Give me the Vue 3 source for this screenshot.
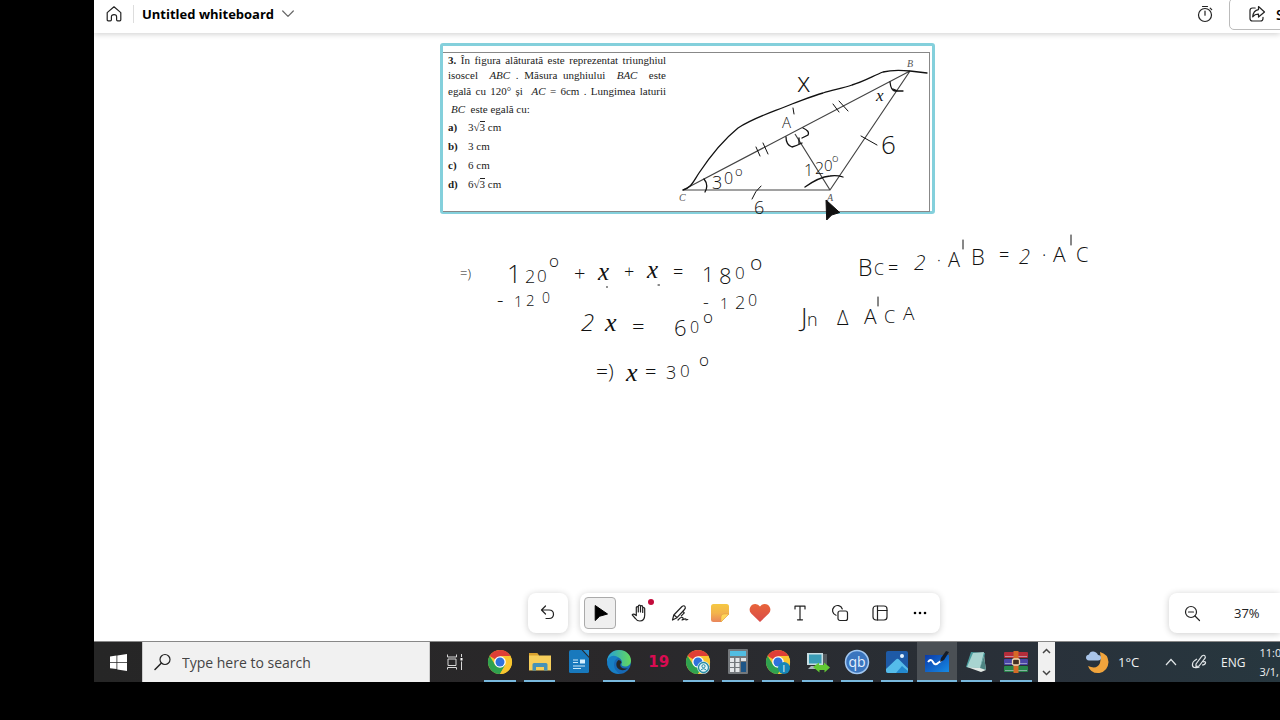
<script setup>
const ink = [
  { t: '=)', x: 460, y: 278, s: 13 },
  { t: '1', x: 507, y: 283, s: 25 }, { t: '2', x: 525, y: 283, s: 18 }, { t: '0', x: 537, y: 282, s: 17 }, { t: 'o', x: 549, y: 267, s: 17 },
  { t: '+', x: 574, y: 281, s: 20 }, { t: 'x', x: 598, y: 280, s: 25, i: true },
  { t: '+', x: 624, y: 278, s: 18 }, { t: 'x', x: 647, y: 278, s: 25, i: true }, { t: '=', x: 673, y: 278, s: 18 },
  { t: '1', x: 702, y: 282, s: 21 }, { t: '8', x: 719, y: 284, s: 22 }, { t: '0', x: 735, y: 279, s: 17 }, { t: 'o', x: 750, y: 270, s: 21 },
  { t: '-', x: 497, y: 307, s: 20 }, { t: '1', x: 514, y: 307, s: 15 }, { t: '2', x: 526, y: 306, s: 15 }, { t: '0', x: 542, y: 303, s: 14 },
  { t: '-', x: 703, y: 309, s: 18 }, { t: '1', x: 720, y: 309, s: 15 }, { t: '2', x: 735, y: 309, s: 18 }, { t: '0', x: 748, y: 306, s: 16 },
  { t: '2', x: 581, y: 331, s: 24, h: true }, { t: 'x', x: 605, y: 331, s: 26, i: true }, { t: '=', x: 632, y: 334, s: 22 },
  { t: '6', x: 674, y: 336, s: 22 }, { t: '0', x: 690, y: 333, s: 16 }, { t: 'o', x: 703, y: 323, s: 17 },
  { t: '=)', x: 596, y: 379, s: 21 }, { t: 'x', x: 626, y: 381, s: 26, i: true }, { t: '=', x: 645, y: 379, s: 20 },
  { t: '3', x: 666, y: 379, s: 18 }, { t: '0', x: 680, y: 377, s: 17 }, { t: 'o', x: 699, y: 366, s: 17 },
  { t: 'B', x: 858, y: 276, s: 23 }, { t: 'C', x: 874, y: 275, s: 16 }, { t: '=', x: 888, y: 274, s: 18 },
  { t: '2', x: 914, y: 270, s: 21, h: true }, { t: '·', x: 937, y: 266, s: 16 },
  { t: 'A', x: 948, y: 267, s: 20 }, { t: 'B', x: 971, y: 265, s: 22 }, { t: '=', x: 999, y: 261, s: 18 },
  { t: '2', x: 1019, y: 264, s: 20, h: true }, { t: '·', x: 1042, y: 261, s: 18 },
  { t: 'A', x: 1053, y: 262, s: 21 }, { t: 'C', x: 1076, y: 262, s: 20 },
  { t: 'J', x: 801, y: 326, s: 26 }, { t: 'n', x: 807, y: 326, s: 18 }, { t: 'Δ', x: 837, y: 325, s: 20 },
  { t: 'A', x: 864, y: 324, s: 21 }, { t: 'C', x: 884, y: 323, s: 18 }, { t: 'A', x: 903, y: 320, s: 19 },
  { t: '3', x: 712, y: 189, s: 18 }, { t: '0', x: 724, y: 184, s: 16 }, { t: 'o', x: 735, y: 176, s: 13 },
  { t: '1', x: 804, y: 176, s: 16 }, { t: '2', x: 815, y: 174, s: 16 }, { t: '0', x: 824, y: 171, s: 15 }, { t: 'o', x: 832, y: 162, s: 11 },
  { t: 'A', x: 782, y: 128, s: 15 }, { t: 'x', x: 797, y: 92, s: 27 }, { t: 'x', x: 876, y: 101, s: 17, i: true },
  { t: '6', x: 881, y: 154, s: 26 }, { t: '6', x: 754, y: 214, s: 18 }
]

const apps = [
  { id: 'chrome', label: 'Chrome', open: true },
  { id: 'files', label: 'File Explorer', open: true },
  { id: 'writer', label: 'Writer' },
  { id: 'edge', label: 'Edge', open: true },
  { id: 'nineteen', label: 'Calendar' },
  { id: 'chrome', label: 'Chrome profile', open: true, badge: 'user' },
  { id: 'calc', label: 'Calculator', open: true },
  { id: 'chrome', label: 'Chrome second profile', open: true, badge: 'letter' },
  { id: 'pc', label: 'Remote computer', open: true },
  { id: 'qb', label: 'qBittorrent', open: true },
  { id: 'photos', label: 'Photos', open: true },
  { id: 'board', label: 'Whiteboard', open: true, active: true },
  { id: 'notes', label: 'Notepad', open: true },
  { id: 'rar', label: 'WinRAR', open: true }
]
</script>

<template>
  <div class="desktop">
    <main class="whiteboard">
      <header class="topbar">
        <button class="plain home" aria-label="Home">
          <svg width="18" height="18" viewBox="0 0 18 18" class="line"><path d="M2.2 7.6 9 1.8l6.8 5.8v7.2q0 1-1 1h-2.2q-1 0-1-1v-3.1q0-2-2.6-2t-2.600 2v3.1q0 1-1 1H3.2q-1 0-1-1z" /></svg>
        </button>
        <span class="rule"></span>
        <button class="plain title">Untitled whiteboard
          <svg width="12" height="8" viewBox="0 0 12 8" class="line soft"><path d="m.7 1 5.3 5.4L11.300 1" /></svg>
        </button>
        <div class="top-right">
          <button class="plain timer" aria-label="Timer">
            <svg width="18" height="18" viewBox="0 0 18 18" class="line"><circle cx="9" cy="10" r="6.500" /><path d="M9 6v4.200M6.500 1.500h5M14.200 3.200l1.500 1.500" /></svg>
          </button>
          <button class="share">
            <svg width="18" height="18" viewBox="0 0 18 18" class="line"><path d="M7.200 3H4.500Q2 3 2 5.500v8Q2 16 4.500 16h8q2.500 0 2.500-2.500v-1.200" /><path d="M10.500 1.500 16.500 7l-6 5V9.200Q7 9 4.700 11.800 5.300 5.300 10.500 4.600z" /></svg>
            Share
          </button>
        </div>
      </header>

      <section class="problem">
        <div class="sheet">
          <div class="statement">
            <p class="full"><b>3.</b> În figura alăturată este reprezentat triunghiul</p>
            <p class="full">isoscel &nbsp;<i>ABC</i> . Măsura unghiului &nbsp;<i>BAC</i> &nbsp;este</p>
            <p class="full">egală cu 120° și &nbsp;<i>AC</i> = 6cm . Lungimea laturii</p>
            <p class="last"><i>BC</i>&nbsp; este egală cu:</p>
          </div>
          <ul class="answers">
            <li><b>a)</b><span>3√<span class="root">3</span> cm</span></li>
            <li><b>b)</b><span>3 cm</span></li>
            <li><b>c)</b><span>6 cm</span></li>
            <li><b>d)</b><span>6√<span class="root">3</span> cm</span></li>
          </ul>
        </div>
      </section>

      <svg class="ink" width="1186" height="590" viewBox="94 0 1186 590">
        <g class="figure">
          <path d="M683 190 910 71 830 190zM795 134l35 56" />
          <text x="907" y="67">B</text><text x="679" y="201">C</text><text x="827" y="201">A</text>
        </g>
        <g class="strokes">
          <path d="M683 190C691 188 693 182 699 173 709 158 722 141 738 128 755 117 773 112 792 104c11-4 20-8 31-11 10-3 20-5 29-8 11-3 21-9 31-13 8-2 17-2 27-1l17 2" />
          <path d="m756 147 4 9M763 143l5 11M833 104l6 8M839 101l9 10M861 136l16 9M761 186q-6 5-9 13" class="thin" />
          <path d="M890 82q1 9 5 9h8M893 89l5 2" />
          <path d="M786 137q0 8 6 10 4-1 10-4M799 138v6M803 128q7 3 5 7l-6 3M704 179q5 6 1 13M805 187q14-10 25-11 7-1 13 1" />
          <path d="m793 108 1 6M963 240v9M1071 235v10M878 297v9" class="thin" />
          <path d="M606.500 287h1M658 285h1.500" class="thin" />
        </g>
        <g class="hand">
          <text v-for="(m, k) in ink" :key="k" :x="m.x" :y="m.y" :font-size="m.s" :class="{ curly: m.i, slanted: m.h }">{{ m.t }}</text>
        </g>
        <path class="pointer" d="m826 200 .7 20 5-5 8-2.500z" />
      </svg>

      <div class="controls">
        <div class="panel">
          <button class="tool" aria-label="Undo"><svg width="20" height="20" viewBox="0 0 20 20" class="line"><path d="m7.500 3-4 4 4 4M3.700 7H11q4.500 0 4.500 4.200T11 15.500H8" /></svg></button>
        </div>
        <div class="panel">
          <button class="tool selected" aria-label="Select"><svg width="20" height="20" viewBox="0 0 20 20"><path d="M5.200 2.500v15l4.500-4.300L17.500 11z" fill="#000" stroke="#000" stroke-linejoin="round" /></svg></button>
          <button class="tool" aria-label="Pan"><svg width="20" height="20" viewBox="0 0 20 20" class="line"><path d="M6.300 11V4.800q0-1.100 1-1.100t1 1.100V9 3.200q0-1.100 1.100-1.100t1.100 1.100V9 3.700q0-1.100 1.100-1.100t1.100 1.100V9.500 5.500q0-1 1-1t1 1V12q0 6-4.800 6-3 0-4.500-2.500L2.200 11.800q1.300-1.800 4.100.700z" /></svg><span class="dot"></span></button>
          <button class="tool" aria-label="Pen"><svg width="20" height="20" viewBox="0 0 20 20" class="line"><path d="m2.500 17 1.300-5L12 3.500q2-1.500 3 0t-.500 3L7 14.700zM4 12l3 2.500M12.800 8.300l1.500 1.500-3 3M8 17q3-3.500 4.500-2.500t-.500 2.500q2-1 3-1.200t1 1.200l1.800-.500" /></svg></button>
          <button class="tool" aria-label="Sticky note"><svg width="20" height="20" viewBox="0 0 20 20"><defs><linearGradient id="note" x2="0" y2="1"><stop stop-color="#f5c842" /><stop offset=".5" stop-color="#f3b44c" /><stop offset="1" stop-color="#e9855c" /></linearGradient></defs><path d="M3.500 1h13Q19 1 19 3.500V11l-8 8H3.500Q1 19 1 16.500v-13Q1 1 3.500 1z" fill="url(#note)" /><path d="M19 11h-5q-3 0-3 3v5z" fill="#ffd65b" stroke="#dd9a3d" stroke-width=".5" stroke-linejoin="round" /></svg></button>
          <button class="tool" aria-label="Reactions"><svg width="22" height="20" viewBox="0 0 22 20"><defs><linearGradient id="heart" x2="0" y2="1"><stop stop-color="#e8643a" /><stop offset="1" stop-color="#d94b49" /></linearGradient></defs><path d="M11 19 2.200 10.500Q-.400 7.500 1.200 4.200 3 .800 6.500 1 9.300 1.200 11 3.500 12.700 1.200 15.500 1q3.500-.200 5.300 3.200 1.600 3.300-1 6.300z" fill="url(#heart)" /></svg></button>
          <button class="tool" aria-label="Text"><svg width="20" height="20" viewBox="0 0 20 20" class="line"><path d="M5 6V3.200h10V6M10 3.200v13.600M7.500 16.800h5" /></svg></button>
          <button class="tool" aria-label="Shapes"><svg width="20" height="20" viewBox="0 0 20 20" class="line"><path d="M6 12.300a5 5 0 1 1 6.300-6.300" /><rect x="8" y="8" width="9.500" height="9.500" rx="2" /></svg></button>
          <button class="tool" aria-label="Templates"><svg width="20" height="20" viewBox="0 0 20 20" class="line"><rect x="3" y="3" width="14" height="14" rx="3" /><path d="M7.500 3v14M7.500 7.500H17" /></svg></button>
          <button class="tool" aria-label="More"><svg width="20" height="20" viewBox="0 0 20 20"><circle cx="5" cy="10" r="1.300" /><circle cx="10" cy="10" r="1.300" /><circle cx="15" cy="10" r="1.300" /></svg></button>
        </div>
        <div class="panel zoom">
          <button class="tool" aria-label="Zoom out"><svg width="20" height="20" viewBox="0 0 20 20" class="line"><circle cx="9" cy="9" r="5.500" /><path d="m13 13 4.500 4.500M6.500 9h5" /></svg></button>
          <span>37%</span>
        </div>
      </div>
    </main>

    <footer class="taskbar">
      <button class="start" aria-label="Start"><svg width="17" height="17" viewBox="0 0 17 17" fill="#fff"><path d="M0 2.500 6.500 1.600V8H0zM7.300 1.500 17 0v8H7.300zM0 8.800h6.500v6.300L0 14.200zM7.300 8.800H17V17l-9.700-1.500z" /></svg></button>
      <label class="search">
        <svg width="18" height="18" viewBox="0 0 18 18" class="line"><circle cx="11" cy="6.500" r="5" /><path d="M7.200 10.200 1 16.500" stroke-width="1.500" /></svg>
        <input type="text" placeholder="Type here to search" aria-label="Search" />
      </label>
      <button class="taskview" aria-label="Task view"><svg width="18" height="18" viewBox="0 0 18 18" fill="none" stroke="#d8d8d8"><path d="M1.500 1.500V4h9V1.500M2 6h8v6.500H2zM1.500 16.500v-2h9v2M15.500 1v3M15.500 8.500V17" /><path d="M15.500 5v2.500" stroke="#fff" stroke-width="2" /></svg></button>
      <nav class="apps">
        <button v-for="(a, k) in apps" :key="k" class="app" :class="{ open: a.open, active: a.active }" :aria-label="a.label">
          <svg v-if="a.id === 'chrome'" width="26" height="26" viewBox="0 0 26 26">
            <circle cx="13" cy="13" r="12" fill="#f9c62f" />
            <path d="M13 13 2.600 7A12 12 0 0 1 23.400 7z" fill="#df3f36" />
            <path d="M2.600 7A12 12 0 0 0 13 25l5.500-9.500H8z" fill="#2fa24f" />
            <path d="M13 7h10.400A12 12 0 0 1 13 25l5.300-9z" fill="#f9c62f" />
            <circle cx="13" cy="13" r="5.800" fill="#fff" /><circle cx="13" cy="13" r="4.500" fill="#2f72dc" />
            <g v-if="a.badge === 'user'"><circle cx="18.500" cy="18.500" r="6.300" fill="#dff3f7" /><circle cx="18.500" cy="18.500" r="5" fill="none" stroke="#278ba3" stroke-width="1.300" /><circle cx="18.500" cy="17.200" r="1.600" fill="none" stroke="#278ba3" /><path d="M15.500 21.500q3-3.500 6 0" fill="none" stroke="#278ba3" /></g>
            <g v-if="a.badge === 'letter'"><circle cx="19" cy="19" r="6" fill="#1787b8" /><text x="17.500" y="22.500" font-size="9" fill="#fff">I</text></g>
          </svg>
          <svg v-else-if="a.id === 'files'" width="24" height="22" viewBox="0 0 24 22"><path d="M1 2h8l2 2.500h12v15H1z" fill="#f6ce5b" /><path d="M1 2h8l2 2.500H1z" fill="#d9a12e" /><path d="M4.500 19.500v-6q0-1.500 1.500-1.500h12q1.500 0 1.500 1.500v6H16V16H8v3.500z" fill="#4592b8" /></svg>
          <svg v-else-if="a.id === 'writer'" width="20" height="25" viewBox="0 0 20 25"><path d="M2 1h10.500L20 9v13.500q0 1.500-1.500 1.500H1.500Q0 24 0 22.500V3q0-2 2-2z" fill="#1879bd" /><path d="M14 1h6v6.500z" fill="#2589cc" /><path d="M4 11h5M4 13.500h5M4 17h12M4 19.500h8" stroke="#c9e8fa" stroke-width="1.200" /><path d="M11 10.500h5v4h-5z" fill="#d5f0ff" /></svg>
          <svg v-else-if="a.id === 'edge'" width="26" height="26" viewBox="0 0 26 26">
            <defs><linearGradient id="edge" x1="0" x2="1"><stop stop-color="#249fda" /><stop offset="1" stop-color="#65d95b" /></linearGradient></defs>
            <circle cx="13" cy="13" r="12" fill="#1769b5" />
            <path d="M1 13C1 5.500 7 1 13 1c7 0 12 5 12 10.500 0 4-3 6-6 6-2.500 0-4-1-3.500-2.200C17 12.500 15 9 11 8 6 7.500 2 10 1 13z" fill="url(#edge)" />
            <path d="M12.500 11C9.500 13 9.500 18.500 13.500 20.500q4.500 2 8.500-1.500-4.500 1.500-7-1-1.800-2.500.500-4.500-.200-2.300-3-2.500z" fill="#272729" />
            <path d="M2.500 9q5-4 10-.500-5 2.500-4.500 8 .500 5 5.500 8.400Q4 25 1.500 16 .800 12 2.500 9z" fill="#187fc4" />
          </svg>
          <span v-else-if="a.id === 'nineteen'" class="nineteen">19</span>
          <svg v-else-if="a.id === 'calc'" width="20" height="25" viewBox="0 0 20 25"><rect width="20" height="25" rx="1" fill="#74787c" /><path d="M2 2h16v5H2z" fill="#51bde1" /><path d="M2 9h4v4H2zM7.500 9h4v4h-4zM13 9h5v3h-5zM2 14h4v4H2zM7.500 14h4v4h-4zM2 19h4v4H2zM7.500 19h4v4h-4z" fill="#e4e6e8" /><path d="M13 13h5v10h-5z" fill="#1d5587" /></svg>
          <svg v-else-if="a.id === 'pc'" width="24" height="22" viewBox="0 0 24 22"><path d="M17 3h4v12h-4z" fill="#555b60" /><path d="M1 2h16v12H1z" fill="#c8dde2" /><path d="M3 3.500h12.500v9H3z" fill="#3a9cb6" /><path d="M5 15h9l2 3H2z" fill="#aab4b8" /><path d="m7 16 6-4.500V14h5v-2.500l6 5-5.500 5V19h-5v2.500z" fill="#62c934" /></svg>
          <svg v-else-if="a.id === 'qb'" width="26" height="26" viewBox="0 0 26 26"><circle cx="13" cy="13" r="11.500" fill="#3b75be" stroke="#a3c8f1" stroke-width="1.500" /><text x="4.500" y="17.500" font-size="14" fill="#e6f2ff">qb</text></svg>
          <svg v-else-if="a.id === 'photos'" width="24" height="24" viewBox="0 0 24 24"><rect x="1" y="1" width="22" height="22" rx="2" fill="#1e5aa7" /><path d="M1 19 11 9.500q1.500-1.500 3 0l9 9V21q0 2-2 2H3q-2 0-2-2z" fill="#55bcea" /><path d="m11 23 6-7 6 5q0 2-2 2z" fill="#2389cf" /><circle cx="17" cy="6" r="2" fill="#e5f4ff" /></svg>
          <svg v-else-if="a.id === 'board'" width="26" height="24" viewBox="0 0 26 24"><defs><linearGradient id="wb" x2="1" y2="1"><stop stop-color="#0c3aa8" /><stop offset="1" stop-color="#168be5" /></linearGradient></defs><path d="M1 5h24v17H1z" fill="url(#wb)" /><path d="M4 12q3-4 5 0t5 1l3-2" fill="none" stroke="#fff" stroke-width="2" /><path d="m16 12 1-4 5-7 3 1-5 8z" fill="#151b27" /></svg>
          <svg v-else-if="a.id === 'notes'" width="24" height="24" viewBox="0 0 24 24"><path d="m7 2 14 1-3 17-16-3z" fill="#4a9c9d" /><path d="m9 3 11-1-4 16-13-1z" fill="#a8d4d0" /><path d="m3 17 13 1 4-12 2 14-5 2z" fill="#e2e9e5" /><path d="m16 18 4-12 2 14z" fill="#4d8583" /></svg>
          <svg v-else width="26" height="24" viewBox="0 0 26 24"><rect x="1" y="2" width="24" height="6" rx="1" fill="#b52d3a" /><rect x="1" y="9" width="24" height="6" rx="1" fill="#4b46a5" /><rect x="1" y="16" width="24" height="6" rx="1" fill="#28864a" /><path d="M2 6.500h22M2 13.500h22M2 20.500h22" stroke="#c9cddd" stroke-width=".6" /><path d="M10.500 1h5v22h-5z" fill="#d56a26" /><rect x="9.500" y="9" width="7" height="6" rx="1.500" fill="#443023" stroke="#efd7b2" stroke-width="1.300" /></svg>
        </button>
      </nav>
      <div class="scroller">
        <button aria-label="Scroll up"><svg width="9" height="6" viewBox="0 0 9 6"><path d="m1 5 3.500-3.500L8 5" /></svg></button>
        <button aria-label="Scroll down"><svg width="9" height="6" viewBox="0 0 9 6"><path d="m1 1 3.500 3.500L8 1" /></svg></button>
      </div>
      <div class="tray">
        <button class="weather">
          <svg width="25" height="25" viewBox="0 0 25 25"><path d="M15 2q8 2 8.500 10-.500 9-9 11Q6 24 3 16q9 4 12-3 1.500-5 0-11z" fill="#f1a43c" /><path d="M4 10.500Q1 10 1 7.500t3-3Q5 1 8.500 1.500T13 5q3 0 3 2.700t-3 2.800z" fill="#a9c5ea" /></svg>
          1°C
        </button>
        <button aria-label="Hidden icons"><svg width="12" height="8" viewBox="0 0 12 8" class="pale"><path d="M1 7 6 1.500 11 7" /></svg></button>
        <button aria-label="Ink workspace"><svg width="16" height="16" viewBox="0 0 16 16" class="pale"><path d="m5 10 6-8q2-1.500 3 0t-.500 3L8 12l-3 .500zM6 5Q2 7 1.500 10t2 3.500 5-.500M12 8q3-1 2.500 1T11 11" /></svg></button>
        <button class="lang">ENG</button>
        <div class="clock"><span>11:0</span><span>3/1,</span></div>
      </div>
    </footer>
  </div>
</template>

<style>
body { background: #000; }
</style>

<style scoped>
* { box-sizing: border-box; }
button, input { font: inherit; color: inherit; background: none; border: 0; padding: 0; margin: 0; }
svg { display: block; flex: none; }
.line { fill: none; stroke: #222; stroke-width: 1.2; stroke-linecap: round; stroke-linejoin: round; }
.soft { stroke: #666; }
.pale { fill: none; stroke: #e2e6e8; stroke-width: 1.2; }
.desktop { height: 100vh; padding: 0 0 38px 94px; display: flex; flex-direction: column; overflow: hidden; background: #000; font-family: "Open Sans", "Noto Sans", sans-serif; }
.whiteboard { flex: 1; position: relative; background: #fff; overflow: hidden; min-height: 0; }
.topbar { height: 33px; padding-bottom: 5px; display: flex; align-items: center; background: #fff; box-shadow: 0 1px 6px #0003; }
.plain { display: flex; align-items: center; }
.home { margin: 0 10px 0 11px; }
.rule { width: 1px; height: 18px; background: #ddd; }
.title { margin-left: 8px; gap: 8px; font-size: 13px; font-weight: 700; color: #000; }
.top-right { margin-left: auto; width: 84px; display: flex; align-items: center; flex: none; height: 100%; }
.timer { margin-right: 15px; }
.share { display: flex; align-items: center; gap: 10px; flex: none; width: 90px; height: 32px; padding-left: 18px; border: 1px solid #bbb; border-radius: 5px; font-size: 14px; font-weight: 600; }
.problem { position: absolute; left: 346px; top: 43px; width: 495px; height: 171px; padding: 6px 2px 1px 0; border: 3px solid #84d0dc; border-radius: 3px; }
.sheet { height: 160px; padding-left: 5px; border: solid #888; border-width: 1px 1px 1px 0; font-family: "Liberation Serif", serif; color: #222; font-size: 12px; }
.statement { width: 218px; font-size: 11px; }
p { margin: 0; line-height: 16px; white-space: nowrap; }
.full { text-align: justify; text-align-last: justify; white-space: normal; }
.full:first-child { line-height: 14px; }
.last { padding: 2px 0 0 3px; }
.answers { margin: 1px 0 0; padding: 0; list-style: none; font-size: 11px; }
.answers li { display: flex; line-height: 19px; white-space: nowrap; }
.answers b { width: 20px; }
.root { border-top: 1px solid #222; line-height: 10px; display: inline-block; }
.ink { position: absolute; left: 0; top: 0; pointer-events: none; }
.figure path { fill: none; stroke: #444; stroke-width: 1.2; }
.figure text { font: italic 10px "Liberation Serif", serif; fill: #555; }
.strokes { fill: none; stroke: #111; stroke-width: 1.3; stroke-linecap: round; }
.strokes .thin { stroke-width: 1; }
.hand { font-family: "Open Sans", sans-serif; font-weight: 300; fill: #111; }
.curly { font-family: "Liberation Serif", serif; font-style: italic; }
.slanted { font-style: italic; }
.pointer { fill: #111; stroke: #111; stroke-linejoin: round; }
.controls { position: absolute; left: 0; right: 0; bottom: 8px; padding-left: 434px; display: flex; gap: 12px; }
.panel { height: 40px; display: flex; align-items: center; background: #fff; border-radius: 8px; box-shadow: 0 1px 7px #0003; }
.tool { position: relative; width: 40px; height: 40px; display: grid; place-items: center; flex: none; }
.selected { width: 32px; height: 32px; margin: 0 4px; border: 1px solid #aaa; border-radius: 4px; background: #efefef; }
.dot { position: absolute; right: 6px; top: 6px; width: 6px; height: 6px; border-radius: 50%; background: #c30c3b; }
.zoom { margin-left: auto; width: 111px; padding-left: 3px; gap: 22px; border-radius: 8px 0 0 8px; font-size: 13px; color: #222; }
.taskbar { height: 41px; flex: none; display: flex; align-items: stretch; border-top: 1px solid #888; background: linear-gradient(90deg, #262626 0, #2a282a 45%, #29313a 80%, #27373f 100%); color: #f0f2f3; }
.start { width: 48px; display: grid; place-items: center; }
.search { width: 288px; display: flex; align-items: center; gap: 10px; padding: 0 11px; background: #f1f1f1; border: 1px solid #ccc; border-width: 0 1px; color: #444; }
.search input { flex: 1; min-width: 0; font-size: 14px; outline: none; }
.search input::placeholder { color: #444; opacity: 1; }
.taskview { width: 50px; display: grid; place-items: center; }
.apps { width: 556px; display: grid; grid-template-columns: repeat(14, 1fr); flex: none; }
.app { position: relative; display: grid; place-items: center; padding-bottom: 1px; }
.app.active { background: #4b5055; }
.app.open::after { content: ""; position: absolute; bottom: 0; left: 4px; right: 4px; height: 2px; background: #79b9de; }
.app.active::after { left: 0; right: 0; }
.nineteen { color: #d90b52; font: 700 15px "DejaVu Sans", sans-serif; }
.scroller { width: 17px; margin-left: 2px; display: flex; flex-direction: column; justify-content: space-between; background: #f0f0f0; flex: none; }
.scroller button { height: 18px; display: grid; place-items: center; }
.scroller path { fill: none; stroke: #444; stroke-width: 1.5; }
.tray { flex: 1; min-width: 0; display: flex; align-items: center; padding-left: 30px; white-space: nowrap; overflow: hidden; }
.tray > * { flex: none; }
.weather { display: flex; align-items: center; gap: 8px; width: 80px; font-size: 13px; }
.tray button + button { margin-right: 14px; }
.lang { font-size: 12px; }
.clock { display: flex; flex-direction: column; line-height: 19px; font-size: 11px; }
</style>
